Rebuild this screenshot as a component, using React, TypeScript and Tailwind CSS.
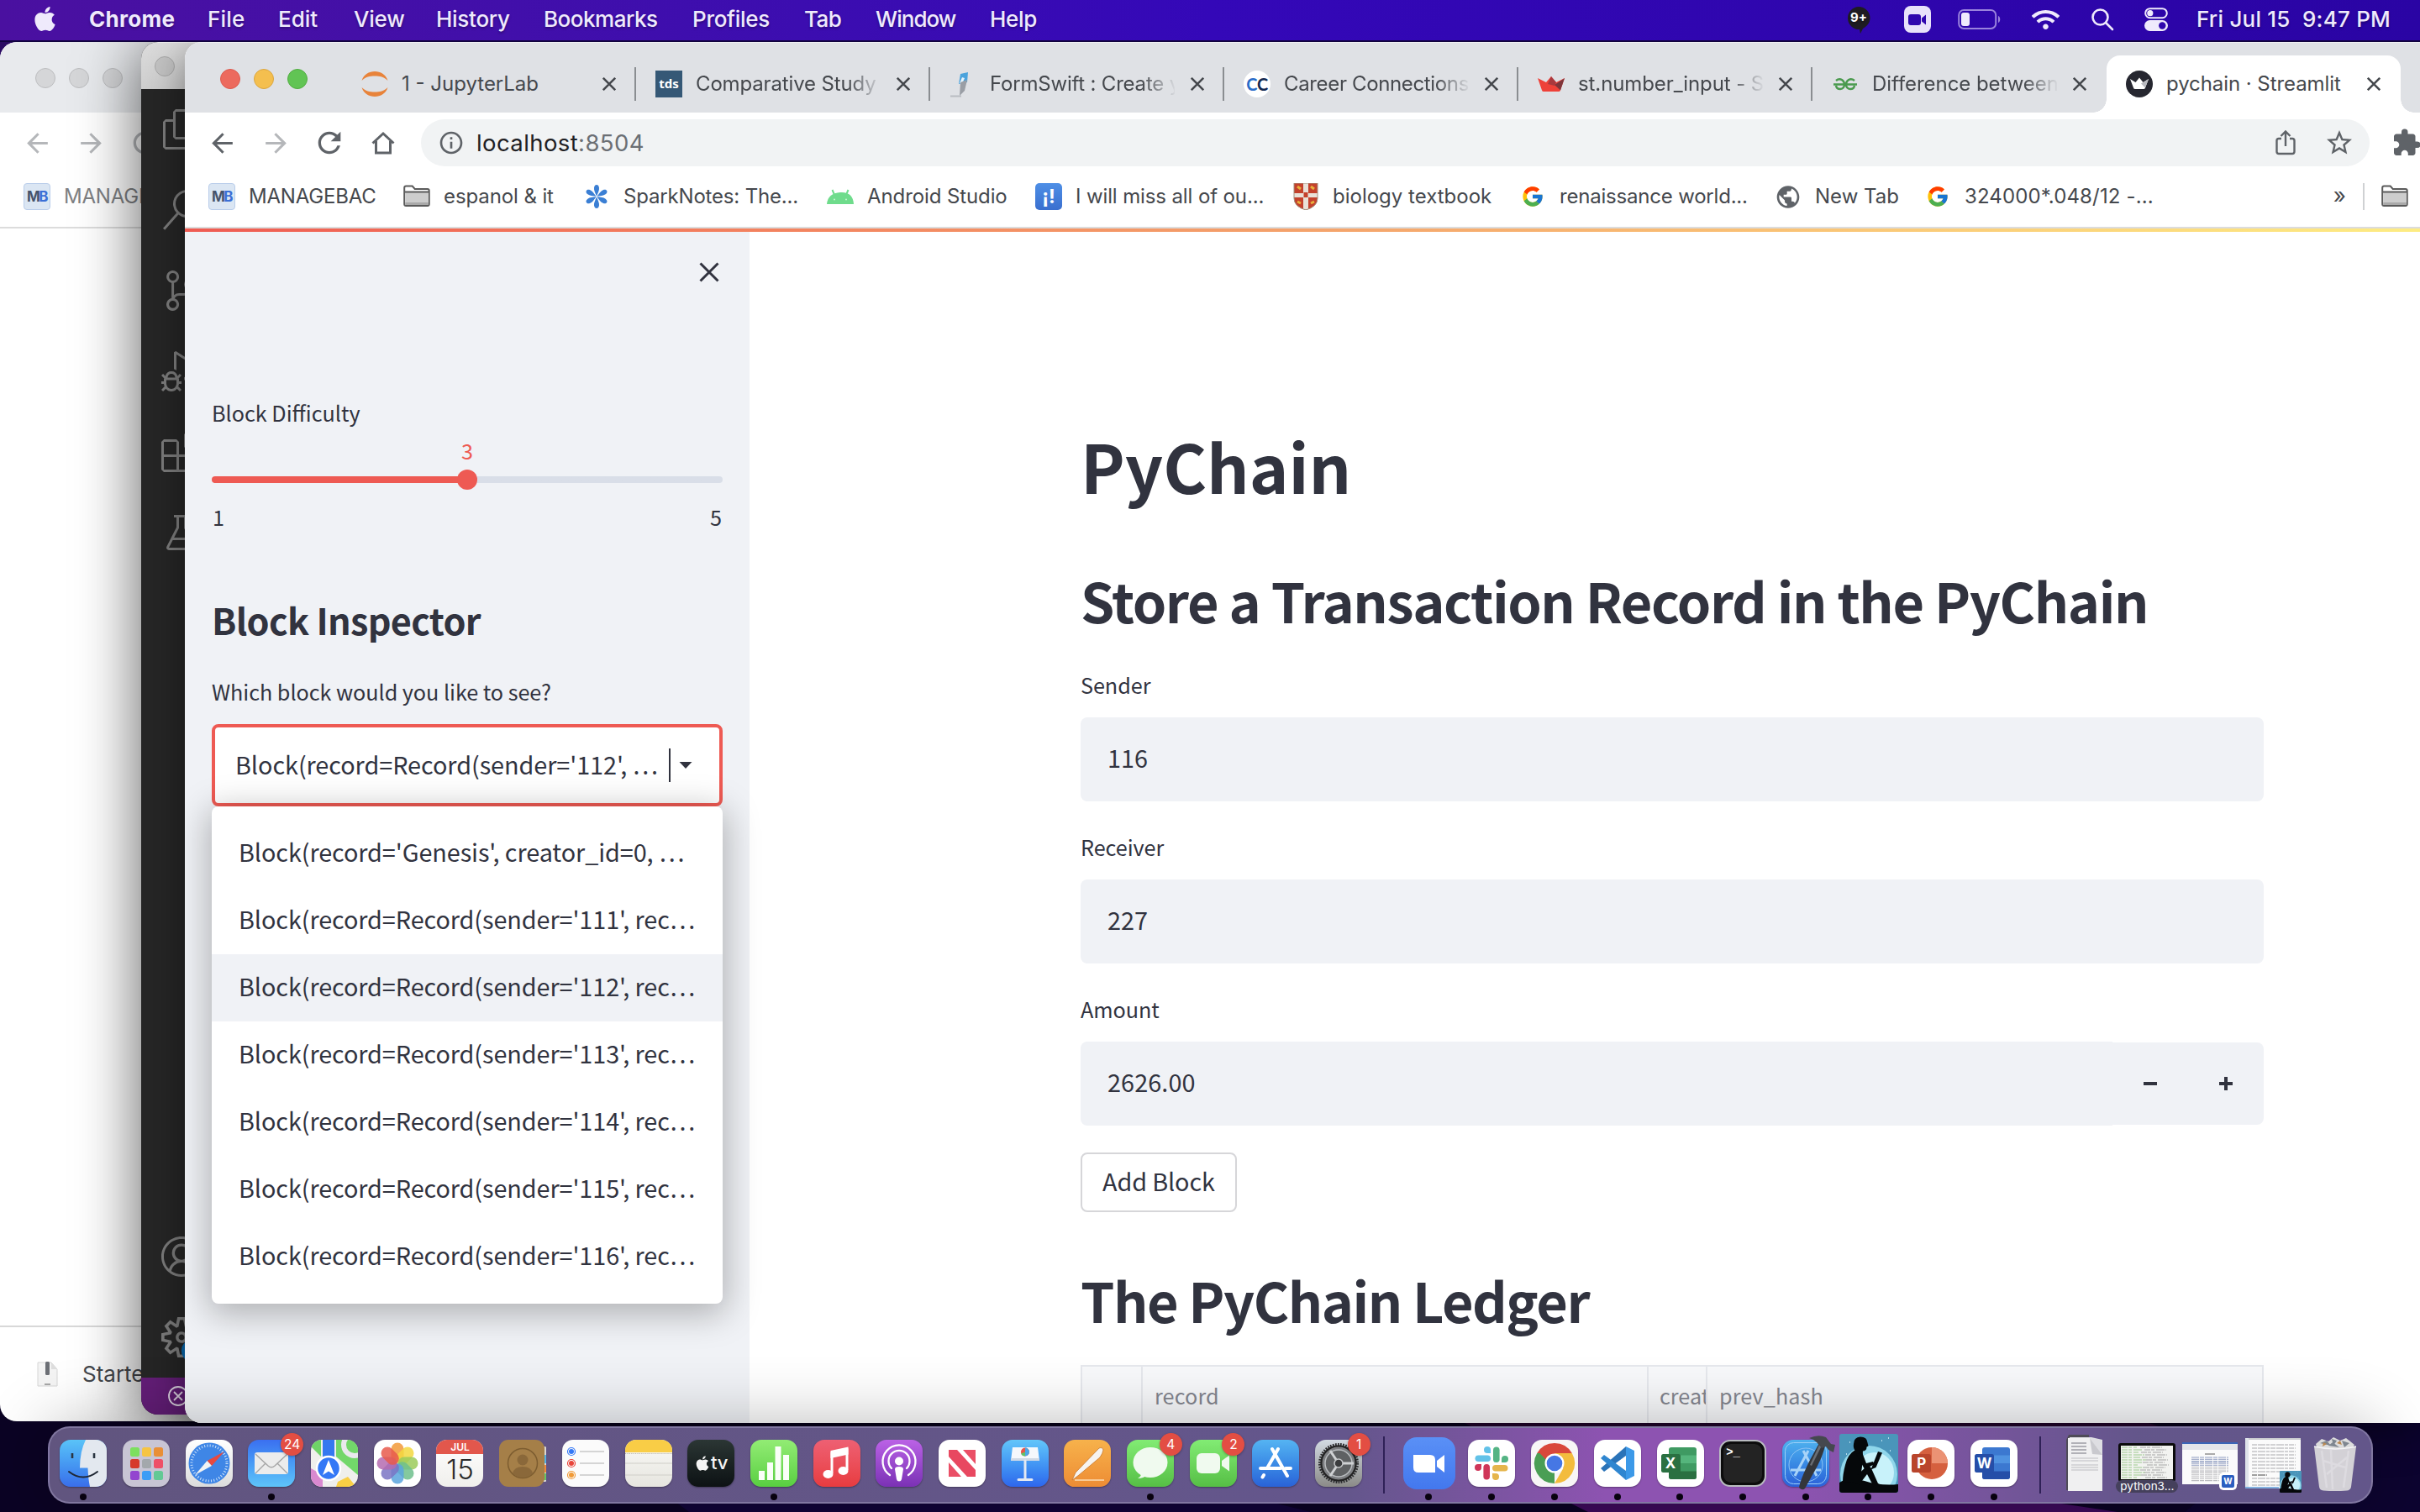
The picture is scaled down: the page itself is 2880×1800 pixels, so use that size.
import React, { ReactNode } from 'react';
import { FaApple, FaWifi } from 'react-icons/fa';
import { FcGoogle } from 'react-icons/fc';
import {
  MdArrowBack,
  MdArrowForward,
  MdExtension,
  MdInfoOutline,
  MdPublic,
  MdRefresh,
  MdStarBorder,
} from 'react-icons/md';
import {
  VscAccount,
  VscBeaker,
  VscDebugAlt,
  VscExtensions,
  VscFiles,
  VscSearch,
  VscSettingsGear,
  VscSourceControl,
} from 'react-icons/vsc';

/* ---------- menu bar ---------- */

const menus: [string, string][] = [
  ['Chrome', 'w-[141px] font-bold tracking-[0.3px]'],
  ['File', 'w-[84px] tracking-[0.2px]'],
  ['Edit', 'w-[90px]'],
  ['View', 'w-[98px] tracking-[-0.2px]'],
  ['History', 'w-[128px] tracking-[-0.28px]'],
  ['Bookmarks', 'w-[177px] tracking-[-0.48px]'],
  ['Profiles', 'w-[133px] tracking-[-0.3px]'],
  ['Tab', 'w-[85px] tracking-[-0.6px]'],
  ['Window', 'w-[136px] tracking-[-0.95px]'],
  ['Help', 'w-[80px] tracking-[-0.3px]'],
];

function MenuBar() {
  return (
    <header className="absolute inset-x-0 top-0 z-40 flex h-[50px] items-center border-b-2 border-[#12033f] bg-linear-to-r from-[#4a10a0] via-[#3408b8] to-[#2a04a4] pb-[2px] text-[26px] leading-[32px] font-medium text-[#efeafc] [text-shadow:0_2px_3px_rgba(0,0,0,0.3)]">
      <div className="flex w-[106px] pb-[2px] pl-[37px]">
        <FaApple size={33} />
      </div>
      {menus.map(([label, cls]) => (
        <span key={label} className={cls}>
          {label}
        </span>
      ))}
      <div className="ml-auto flex items-center">
        <div className="flex w-[70px] justify-center">
          <div className="relative flex h-[32px] w-[28px] items-start justify-center">
            <svg className="absolute inset-0" width="28" height="34" viewBox="0 0 28 34">
              <path d="M14 1a13.500 13.500 0 0 1 13.500 13.500c0 6-4 10-8.500 12.500L16 33l-1-5A13.500 13.500 0 1 1 14 1z" fill="#1e1c22" />
            </svg>
            <span className="relative pt-[1px] text-[15px] leading-[26px] font-bold text-white">9+</span>
          </div>
        </div>
        <div className="flex w-[70px] justify-center">
          <svg width="32" height="32" viewBox="0 0 32 32">
            <rect width="32" height="32" rx="8" fill="#e8e2fa" />
            <rect x="5" y="10" width="15" height="13" rx="3" fill="#2f07ae" />
            <path d="M21 14.500l5-4v12l-5-4z" fill="#2f07ae" />
          </svg>
        </div>
        <div className="flex w-[78px] justify-center">
          <svg width="52" height="26" viewBox="0 0 52 26">
            <rect x="1.200" y="2" width="44" height="22" rx="6" fill="none" stroke="#9a83dd" strokeWidth="2" />
            <rect x="4" y="5" width="10" height="16" rx="3" fill="#efeafc" />
            <path d="M48 9c3 1 3 7 0 8z" fill="#9a83dd" />
          </svg>
        </div>
        <div className="flex w-[78px] justify-center">
          <FaWifi size={33} />
        </div>
        <div className="flex w-[58px] justify-center">
          <svg width="28" height="28" viewBox="0 0 28 28" fill="none" stroke="#efeafc" strokeWidth="2.600" strokeLinecap="round">
            <circle cx="11.500" cy="11.500" r="9" />
            <path d="M18.500 18.500l7.500 7.500" />
          </svg>
        </div>
        <div className="flex w-[70px] justify-center">
          <svg width="28" height="28" viewBox="0 0 28 28">
            <rect x="1.200" y="1.200" width="25.600" height="11" rx="5.500" fill="none" stroke="#efeafc" strokeWidth="2" />
            <circle cx="6.800" cy="6.700" r="3.600" fill="#efeafc" />
            <rect x="0" y="15" width="28" height="13" rx="6.500" fill="#efeafc" />
            <circle cx="21.300" cy="21.500" r="4.200" fill="#2f07ae" />
          </svg>
        </div>
        <span className="w-[279px] pl-[13px] tracking-[0.22px] whitespace-pre">{'Fri Jul 15  9:47 PM'}</span>
      </div>
    </header>
  );
}

/* ---------- shared browser pieces ---------- */

function ManageBacIcon() {
  return (
    <div className="flex size-[32px] shrink-0 items-center justify-center rounded-[4px] border border-[#b9cdea] bg-[#dbe6f3] text-[17px] leading-none font-bold tracking-[-1.500px]">
      <span className="text-[#46536b]">M</span>
      <span className="text-[#3b6fd6]">B</span>
    </div>
  );
}

function FolderIcon() {
  return (
    <svg width="32" height="32" viewBox="0 0 32 32" className="shrink-0">
      <path d="M1.200 5.500q0-2 2-2h7.500l3 3.500h15q2 0 2 2v16q0 2-2 2H3.200q-2 0-2-2z" fill="#fff" stroke="#5a5a5a" strokeWidth="2" />
      <path d="M2.200 11h27.600v12H2.200z" fill="#cdcdcd" />
      <path d="M2.200 23h27.600v3H2.200z" fill="#a9a9a9" />
      <path d="M1 10.500h30" stroke="#5a5a5a" strokeWidth="2" />
    </svg>
  );
}

const HomeIcon = () => (
  <svg width="30" height="30" viewBox="0 0 30 30" fill="none" stroke="#5f6368" strokeWidth="3">
    <path d="M2.500 15.500L15 4l12.500 11.500M6.500 13v14h17V13" />
  </svg>
);

const CloseX = ({ size = 16 }: { size?: number }) => (
  <svg width={size} height={size} viewBox="0 0 16 16" fill="none" stroke="#45484d" strokeWidth="2.500" className="shrink-0">
    <path d="M.8.8l14.400 14.400M15.200.8L.8 15.200" />
  </svg>
);

/* ---------- tabs ---------- */

const JupyterIcon = () => (
  <svg width="32" height="32" viewBox="0 0 32 32" fill="#e8833a">
    <path d="M.5 12C3 4.500 9 1 16 1s13 3.500 15.500 11C27 7.500 22 6.500 16 6.500S5 7.500.5 12z" />
    <path d="M.5 20C3 27.500 9 31 16 31s13-3.500 15.500-11C27 24.500 22 25.500 16 25.500S5 24.500.5 20z" />
  </svg>
);
const TdsIcon = () => (
  <div className="flex size-[32px] items-center justify-center bg-[#355876] pb-[2px] font-['Noto_Sans'] text-[15px] leading-none font-bold text-white">tds</div>
);
const FormSwiftIcon = () => (
  <svg width="32" height="32" viewBox="0 0 32 32">
    <path d="M13 4l9-2-1 12-10 2z" fill="#4ba3dc" />
    <path d="M15 8l3 1-3 7-3-1z" fill="#e8f3fb" />
    <path d="M13 14l8-3-3 13-6 6z" fill="#9a9ea5" />
    <path d="M1 30.500h13" stroke="#b9bcc2" strokeWidth="2" />
  </svg>
);
const CareerIcon = () => (
  <div className="flex size-[32px] items-center justify-center rounded-full bg-white font-['Lato'] text-[20px] leading-none font-bold tracking-[-0.500px]">
    <span className="text-[#2a6cc8]">C</span>
    <span className="text-[#12284f]">C</span>
  </div>
);
const CrownIcon = () => (
  <svg width="32" height="32" viewBox="0 0 32 32">
    <path d="M0 9l10 5 6-7 6 7 10-5-5 14.500q-.5 1.500-2 1.500H7q-1.500 0-2-1.500z" fill="#ee4139" />
    <path d="M16 7l6 7-2 4-8-2z" fill="#a8393e" />
    <path d="M32 9l-5 14.500-7-6.500z" fill="#7d353b" />
  </svg>
);
const GfgIcon = () => (
  <svg width="32" height="32" viewBox="0 0 32 32" fill="none" stroke="#4a9a4e" strokeWidth="2.400">
    <path d="M5 12q3.500-3 7-1 3 2 3 5.500 0 5-5 5.500-4.500 0-5-4M27 12q-3.500-3-7-1-3 2-3 5.500 0 5 5 5.500 4.500 0 5-4M2 16.500h28" />
  </svg>
);
const StreamlitIcon = () => (
  <svg width="32" height="32" viewBox="0 0 32 32">
    <circle cx="16" cy="16" r="16" fill="#262730" />
    <path d="M5 10l6.500 4L16 8.500l4.500 5.500L27 10l-4 10.500q-.4 1.500-2 1.500H11q-1.600 0-2-1.500z" fill="#fff" />
    <path d="M27 10l-4 10.500-5-5z" fill="#b9bac0" />
  </svg>
);

const tabs: { title: string; icon: ReactNode; cls: string; fade?: boolean; active?: boolean; sep?: boolean }[] = [
  { title: '1 - JupyterLab', icon: <JupyterIcon />, cls: '', sep: true },
  { title: 'Comparative Study', icon: <TdsIcon />, cls: 'tracking-[-0.15px]', fade: true, sep: true },
  { title: 'FormSwift : Create y', icon: <FormSwiftIcon />, cls: 'tracking-[-0.2px]', fade: true, sep: true },
  { title: 'Career Connections', icon: <CareerIcon />, cls: 'tracking-[-0.35px]', fade: true, sep: true },
  { title: 'st.number_input - S', icon: <CrownIcon />, cls: 'tracking-[-0.1px]', fade: true, sep: true },
  { title: 'Difference between', icon: <GfgIcon />, cls: 'tracking-[-0.05px]', fade: true },
  { title: 'pychain · Streamlit', icon: <StreamlitIcon />, cls: 'tracking-[-0.07px]', active: true },
];

function TabStrip() {
  return (
    <div className="flex h-[84px] items-end overflow-hidden border-t border-[#f0f1f3] bg-[#dfe1e5]">
      <div className="flex h-[84px] w-[187px] shrink-0 items-center gap-[16px] pt-[3px] pl-[42px]">
        <span className="size-[24px] rounded-full border border-[#dd5b50] bg-[#ec6a5e]" />
        <span className="size-[24px] rounded-full border border-[#dba640] bg-[#f4bf4f]" />
        <span className="size-[24px] rounded-full border border-[#52ad42] bg-[#61c454]" />
      </div>
      {tabs.map((t) => (
        <div
          key={t.title}
          className={
            t.active
              ? 'relative flex h-[68px] w-[350px] shrink-0 items-center rounded-t-[16px] bg-white pl-[23px]'
              : 'relative flex h-[68px] w-[350px] shrink-0 items-center pl-[23px]'
          }
        >
          {t.active && (
            <>
              <span className="absolute bottom-0 -left-[16px] size-[16px] bg-[radial-gradient(circle_at_0_0,transparent_15.5px,#fff_16px)]" />
              <span className="absolute -right-[16px] bottom-0 size-[16px] bg-[radial-gradient(circle_at_100%_0,transparent_15.5px,#fff_16px)]" />
            </>
          )}
          <span className="shrink-0">{t.icon}</span>
          <span
            className={`ml-[16px] w-[220px] shrink-0 text-[24px] leading-[32px] whitespace-nowrap text-[#45484d] ${t.cls} ${t.fade ? '[mask-image:linear-gradient(to_right,#000_82%,transparent_101%)]' : ''}`}
          >
            {t.title}
          </span>
          <span className="ml-[19px]">
            <CloseX />
          </span>
          {t.sep && <span className="ml-auto h-[40px] w-[2px] bg-[#8a8d91]" />}
        </div>
      ))}
    </div>
  );
}

/* ---------- toolbar and bookmarks ---------- */

function Toolbar() {
  return (
    <div className="flex h-[72px] items-center overflow-hidden bg-white pl-[12px] text-[#5f6368]">
      <span className="flex w-[64px] shrink-0 justify-center">
        <MdArrowBack size={37} />
      </span>
      <span className="flex w-[64px] shrink-0 justify-center text-[#b5b7ba]">
        <MdArrowForward size={37} />
      </span>
      <span className="flex w-[64px] shrink-0 justify-center">
        <MdRefresh size={40} />
      </span>
      <span className="flex w-[64px] shrink-0 justify-center">
        <HomeIcon />
      </span>
      <div className="ml-[13px] flex h-[56px] w-[2319px] shrink-0 items-center rounded-full bg-[#f1f3f4] pl-[20px]">
        <MdInfoOutline size={32} />
        <span className="ml-[14px] text-[27.500px] leading-[36px] tracking-[0.400px] text-[#1f2124]">
          localhost<span className="text-[#6b6f74]">:8504</span>
        </span>
        <div className="ml-auto flex items-center gap-[33px] pr-[18px]">
          <svg width="26" height="32" viewBox="0 0 26 32" fill="none" stroke="#5f6368" strokeWidth="2.400">
            <path d="M8 11H5q-2.500 0-2.500 2.500v13Q2.500 29 5 29h16q2.500 0 2.500-2.500v-13Q23.500 11 21 11h-3M13 20V3M7.500 8L13 2.500 18.500 8" />
          </svg>
          <MdStarBorder size={36} />
        </div>
      </div>
      <span className="ml-[26px] shrink-0">
        <MdExtension size={36} />
      </span>
    </div>
  );
}

const SparkIcon = () => (
  <svg width="32" height="32" viewBox="0 0 32 32" fill="#3b7fd4">
    {[0, 60, 120, 180, 240, 300].map((a) => (
      <path key={a} d="M16 15.500c-1.600-4-3.400-7-3-10C13.300 3 14.500 2 16 2s2.700 1 3 3.500c.4 3-1.400 6-3 10z" transform={`rotate(${a} 16 16)`} />
    ))}
  </svg>
);
const AndroidIcon = () => (
  <svg width="32" height="32" viewBox="0 0 32 32">
    <path d="M0 25Q1 12 16 11t16 14z" fill="#6fdc8c" />
    <path d="M9 14L6.500 8M23 14l2.500-6" stroke="#6fdc8c" strokeWidth="2" />
    <circle cx="9" cy="19.500" r="1" fill="#c8f3d2" />
    <circle cx="23" cy="19.500" r="1" fill="#c8f3d2" />
  </svg>
);
const NoteIcon = () => (
  <div className="flex size-[32px] items-center justify-center rounded-[5px] bg-linear-to-b from-[#4e8fe6] to-[#3a6fcf] text-[23px] leading-none font-bold text-white">¡!</div>
);
const ShieldIcon = () => (
  <svg width="32" height="32" viewBox="0 0 32 32">
    <path d="M2 0h28v18q0 10-14 14Q2 28 2 18z" fill="#c4412c" />
    <path d="M13 0h6v31.500h-6zM2 12h28v5H2z" fill="#e9e1d8" />
    <path d="M6 4l4 3M22 4l4 3M6 22l4 2M22 24l4-2" stroke="#e8b23c" strokeWidth="3" />
    <path d="M13.500 11h5v6h-5z" fill="#c4412c" />
    <path d="M2 0h28v18q0 10-14 14Q2 28 2 18z" fill="none" stroke="#a2917f" strokeWidth="1" />
  </svg>
);

const bookmarks: { title: string; icon: ReactNode; cls: string; textCls: string }[] = [
  { title: 'MANAGEBAC', icon: <ManageBacIcon />, cls: 'w-[232px]', textCls: 'tracking-[-0.2px]' },
  { title: 'espanol & it', icon: <FolderIcon />, cls: 'w-[214px]', textCls: 'tracking-[-0.1px]' },
  { title: 'SparkNotes: The...', icon: <SparkIcon />, cls: 'w-[290px]', textCls: 'tracking-[-0.18px]' },
  { title: 'Android Studio', icon: <AndroidIcon />, cls: 'w-[248px]', textCls: 'tracking-[-0.1px]' },
  { title: 'I will miss all of ou...', icon: <NoteIcon />, cls: 'w-[306px]', textCls: 'tracking-[-0.12px]' },
  { title: 'biology textbook', icon: <ShieldIcon />, cls: 'w-[270px]', textCls: '' },
  { title: 'renaissance world...', icon: <FcGoogle size={28} />, cls: 'w-[304px]', textCls: 'tracking-[-0.2px]' },
  { title: 'New Tab', icon: <MdPublic size={35} color="#5f6368" />, cls: 'w-[178px]', textCls: '' },
  { title: '324000*.048/12 -...', icon: <FcGoogle size={28} />, cls: 'w-[300px]', textCls: 'tracking-[0.14px]' },
];

function BookmarkBar() {
  return (
    <div className="flex h-[66px] items-start overflow-hidden border-b-2 border-[#dcdcdc] bg-white pl-[28px] text-[24px] leading-[32px] text-[#45484d]">
      {bookmarks.map((b) => (
        <div key={b.title} className={`flex h-[56px] shrink-0 items-center ${b.cls}`}>
          <span className="flex size-[32px] shrink-0 items-center justify-center">{b.icon}</span>
          <span className={`ml-[16px] whitespace-nowrap ${b.textCls}`}>{b.title}</span>
        </div>
      ))}
      <div className="ml-auto flex h-[56px] shrink-0 items-center pr-[14px]">
        <span className="mr-[20px] pb-[3px] text-[26px]">»</span>
        <span className="mr-[20px] h-[32px] w-[2px] bg-[#cfd1d3]" />
        <FolderIcon />
      </div>
    </div>
  );
}

/* ---------- streamlit page ---------- */

const options = [
  "Block(record='Genesis', creator_id=0, …",
  "Block(record=Record(sender='111', rec…",
  "Block(record=Record(sender='112', rec…",
  "Block(record=Record(sender='113', rec…",
  "Block(record=Record(sender='114', rec…",
  "Block(record=Record(sender='115', rec…",
  "Block(record=Record(sender='116', rec…",
];

function Sidebar() {
  return (
    <aside className="flex w-[672px] shrink-0 flex-col bg-[#f0f2f6] px-[32px]">
      <div className="flex h-[96px] items-center justify-end pr-[4px]">
        <svg width="24" height="24" viewBox="0 0 24 24" fill="none" stroke="#31333f" strokeWidth="3">
          <path d="M1.500 1.500l21 21M22.500 1.500l-21 21" />
        </svg>
      </div>
      <div className="mt-[99px] text-[25.200px] leading-[40px]">Block Difficulty</div>
      <div className="mt-[5px] text-center text-[25.200px] leading-[40px] text-[#ee5a53]">3</div>
      <div className="relative mt-[11px] h-[8px] rounded-[4px] bg-linear-to-r from-[#ee5a53] from-50% to-[#d9dee8] to-50%">
        <span className="absolute top-[-8px] left-[292px] size-[24px] rounded-full bg-[#ee5a53]" />
      </div>
      <div className="mt-[20px] flex justify-between pr-[1px] pl-[1px] text-[25.200px] leading-[40px]">
        <span>1</span>
        <span>5</span>
      </div>
      <h2 className="mt-[72px] text-[43.200px] leading-[60px] font-bold tracking-[-0.700px]">Block Inspector</h2>
      <div className="mt-[36px] text-[25.200px] leading-[40px] tracking-[-0.040px]">Which block would you like to see?</div>
      <div className="relative mt-[19px] flex h-[98px] items-center rounded-[8px] border-4 border-[#ee5a53] bg-white pl-[24px]">
        <span className="pb-[3px] text-[28.800px] leading-[40px] tracking-[-0.050px] whitespace-nowrap">Block(record=Record(sender='112', …</span>
        <span className="absolute left-[540px] h-[40px] w-[2px] bg-[#31333f]" />
        <svg className="absolute left-[552px]" width="16" height="8" viewBox="0 0 16 8">
          <path d="M.5 0h15L8 8z" fill="#31333f" />
        </svg>
        <div className="absolute top-[94px] -left-[4px] w-[608px] rounded-[8px] bg-white py-[16px] shadow-[0_8px_40px_4px_rgba(0,0,0,0.28)]">
          {options.map((o, i) => (
            <div
              key={o}
              className={
                i === 2
                  ? 'h-[80px] bg-[#f0f2f6] pl-[32px] text-[28.800px] leading-[75px] tracking-[-0.080px] whitespace-nowrap'
                  : 'h-[80px] pl-[32px] text-[28.800px] leading-[75px] tracking-[-0.080px] whitespace-nowrap'
              }
            >
              {o}
            </div>
          ))}
        </div>
      </div>
    </aside>
  );
}

function Field({ label, children }: { label: string; children: ReactNode }) {
  return (
    <div className="mb-[35px]">
      <div className="text-[25.200px] leading-[38px] tracking-[-0.050px]">{label}</div>
      <div className="mt-[20px]">{children}</div>
    </div>
  );
}

function PageMain() {
  return (
    <main className="flex-1 pt-[228px] pl-[394px]">
      <div className="w-[1408px]">
        <h1 className="text-[79.200px] leading-[100px] font-bold tracking-[-0.050px]">PyChain</h1>
        <h2 className="mt-[70px] text-[64.800px] leading-[80px] font-bold tracking-[-1.400px] whitespace-nowrap">Store a Transaction Record in the PyChain</h2>
        <div className="mt-[42px]">
          <Field label="Sender">
            <div className="h-[100px] rounded-[8px] bg-[#f0f2f6] pl-[32px] text-[28.800px] leading-[96px]">116</div>
          </Field>
          <Field label="Receiver">
            <div className="h-[100px] rounded-[8px] bg-[#f0f2f6] pl-[32px] text-[28.800px] leading-[96px]">227</div>
          </Field>
          <Field label="Amount">
            <div className="flex items-center">
              <div className="h-[100px] w-[1228px] rounded-l-[8px] bg-[#f0f2f6] pl-[32px] text-[28.800px] leading-[96px] tracking-[0.100px]">2626.00</div>
              <div className="flex h-[98px] flex-1 items-center rounded-r-[8px] bg-[#f0f2f6]">
                <span className="flex w-[90px] justify-center">
                  <span className="h-[4px] w-[16px] bg-[#31333f]" />
                </span>
                <svg className="ml-[37px]" width="16" height="16" viewBox="0 0 16 16" fill="#31333f">
                  <path d="M6 0h4v6h6v4h-6v6H6v-6H0V6h6z" />
                </svg>
              </div>
            </div>
          </Field>
        </div>
        <button className="mt-[-3px] flex h-[71px] items-center rounded-[8px] border-2 border-[#d6d6d9] bg-white px-[24px] pb-[4px] text-[28.800px] leading-[40px] tracking-[-0.110px]">
          Add Block
        </button>
        <h2 className="mt-[64px] text-[64.800px] leading-[80px] font-bold tracking-[-1.500px] whitespace-nowrap">The PyChain Ledger</h2>
        <div className="mt-[38px] flex h-[80px] border-2 border-[#e6e8ed] bg-[#f8f9fb] text-[25.200px] leading-[68px] text-[#84868f]">
          <div className="w-[70px]" />
          <div className="w-[602px] border-l-2 border-[#e6e8ed] pl-[14px] tracking-[0.110px]">record</div>
          <div className="w-[70px] overflow-hidden border-l-2 border-[#e6e8ed] pl-[13px] whitespace-nowrap">creat</div>
          <div className="flex-1 border-l-2 border-[#e6e8ed] pl-[14px] tracking-[0.100px]">prev_hash</div>
        </div>
      </div>
    </main>
  );
}

/* ---------- windows ---------- */

function BackBrowser() {
  return (
    <section className="absolute top-[50px] left-0 flex h-[1642px] w-[400px] flex-col overflow-hidden rounded-[20px] bg-white">
      <div className="flex h-[84px] items-center gap-[16px] bg-[#e8eaed] pt-[2px] pl-[42px]">
        {[0, 1, 2].map((i) => (
          <span key={i} className="size-[24px] rounded-full border border-[#bcbdbf] bg-[#d5d6d8]" />
        ))}
      </div>
      <div className="flex h-[72px] items-center pl-[12px] text-[#b5b7ba]">
        <span className="flex w-[64px] shrink-0 justify-center">
          <MdArrowBack size={37} />
        </span>
        <span className="flex w-[64px] shrink-0 justify-center">
          <MdArrowForward size={37} />
        </span>
        <span className="flex w-[64px] shrink-0 justify-center">
          <MdRefresh size={40} />
        </span>
      </div>
      <div className="flex h-[66px] items-start border-b-2 border-[#dcdcdc] pl-[28px]">
        <div className="flex h-[56px] items-center text-[24px] leading-[32px] tracking-[-0.200px] text-[#7e8083]">
          <ManageBacIcon />
          <span className="ml-[16px]">MANAGEBAC</span>
        </div>
      </div>
      <div className="mt-auto flex h-[114px] items-center border-t-2 border-[#d8d8d8] pl-[44px] text-[26px] leading-[32px] text-[#45484d]">
        <svg width="25" height="30" viewBox="0 0 25 30">
          <path d="M1 1h16l7 8v20H1z" fill="#f4f4f4" stroke="#d6d6d6" />
          <path d="M17 1v8h7z" fill="#dedede" />
          <rect x="10" y="0" width="5" height="16" rx="1.500" fill="#6d7076" />
          <path d="M9 27h7" stroke="#a6a6a6" strokeWidth="2" />
        </svg>
        <span className="ml-[29px]">Started</span>
      </div>
    </section>
  );
}

function CodeWindow() {
  const cell = 'flex h-[96px] w-[96px] items-center justify-center';
  return (
    <section className="absolute top-[50px] left-[168px] flex h-[1634px] w-[400px] flex-col overflow-clip rounded-[20px] bg-[#262626] text-[#7d7d7d] shadow-[0_10px_70px_6px_rgba(0,0,0,0.55)]">
      <div className="flex h-[56px] items-center border-t border-[#efefef] bg-linear-to-b from-[#dcdcdc] to-[#cfcfcf] pl-[16px]">
        <span className="size-[24px] rounded-full border border-[#a9a9a9] bg-[#c4c4c4]" />
      </div>
      <div className={cell}><VscFiles size={48} /></div>
      <div className={cell}><VscSearch size={48} /></div>
      <div className={cell}><VscSourceControl size={48} /></div>
      <div className={cell}><VscDebugAlt size={48} /></div>
      <div className={cell}><VscExtensions size={48} /></div>
      <div className={cell}><VscBeaker size={48} /></div>
      <div className="mt-auto">
        <div className={cell}><VscAccount size={48} /></div>
      </div>
      <div className={`relative ${cell}`}>
        <VscSettingsGear size={48} />
        <span className="absolute top-[50px] left-[48px] size-[28px] rounded-full bg-[#0a6ab0]" />
      </div>
      <div className="flex h-[44px] items-center bg-[#641e78] pl-[32px]">
        <svg width="24" height="24" viewBox="0 0 24 24" fill="none" stroke="#e6dcea" strokeWidth="1.800">
          <circle cx="12" cy="12" r="11" />
          <path d="M7 7l10 10M17 7L7 17" />
        </svg>
      </div>
    </section>
  );
}

function FrontBrowser() {
  return (
    <section className="absolute top-[50px] left-[220px] flex h-[1644px] w-[2660px] flex-col rounded-l-[20px] bg-white shadow-[0_10px_50px_rgba(0,0,0,0.45)]">
      <div className="flex h-full flex-col overflow-hidden rounded-l-[20px]">
        <TabStrip />
        <Toolbar />
        <BookmarkBar />
        <div className="h-[4px] shrink-0 bg-linear-to-r from-[#ef5b52] via-[#f4a26b] to-[#fdec83]" />
        <div className="flex min-h-0 flex-1 font-['Noto_Sans_CJK_SC',sans-serif] text-[#31333f]">
          <Sidebar />
          <PageMain />
        </div>
      </div>
    </section>
  );
}

/* ---------- dock icons ---------- */

const tile = 'flex size-[56px] items-center justify-center overflow-hidden rounded-[13px] shadow-[0_1px_2px_rgba(0,0,0,0.35)]';
const S = ({ children }: { children: ReactNode }) => (
  <svg width="56" height="56" viewBox="0 0 56 56" fill="none">
    {children}
  </svg>
);

const Finder = () => (
  <div className={`${tile} bg-linear-to-b from-[#5ac3f8] to-[#3a6eea]`}>
    <S>
      <path d="M31 0h25v56H36q-2-9-2.500-22.500H24Q24 14 31 0z" fill="#e3e8ef" />
      <path d="M15 16v6M41 16v6" stroke="#2a3440" strokeWidth="2.600" />
      <path d="M11 38q17 13 34 0" stroke="#1f2733" strokeWidth="2" strokeLinecap="round" />
    </S>
  </div>
);
const launchColors = ['#7ddf5f', '#f6c443', '#e98f37', '#d63a2c', '#a3a8ac', '#ee5068', '#9345cf', '#3c9df5', '#63c995'];
const Launchpad = () => (
  <div className={`${tile} bg-[#c8c5d4]`}>
    <S>
      {launchColors.map((c, i) => (
        <rect key={c} x={9 + (i % 3) * 14} y={9 + Math.floor(i / 3) * 14} width="11" height="11" rx="2.500" fill={c} />
      ))}
    </S>
  </div>
);
const Safari = () => (
  <div className={`${tile} bg-linear-to-b from-white to-[#dcdcdc]`}>
    <S>
      <circle cx="28" cy="28" r="24.500" fill="#3f86e6" />
      <circle cx="28" cy="28" r="21" stroke="#cfe4fb" strokeWidth="3" strokeDasharray="1 2.300" />
      <path d="M46 14L31 31l-5.500-6z" fill="#e8493f" />
      <path d="M11 42l14.500-17L31 31z" fill="#f3f3f3" />
    </S>
  </div>
);
const Mail = () => (
  <div className={`${tile} bg-linear-to-b from-[#3b6ff0] to-[#5ec4f9]`}>
    <S>
      <rect x="8" y="15" width="40" height="26" rx="3" fill="#ececec" />
      <path d="M9 17l15 14q4 3.500 8 0l15-14M9 40l12-12M47 40L35 28" stroke="#a5a5a5" strokeWidth="1.400" />
    </S>
  </div>
);
const MapsIcon = () => (
  <div className={`${tile} bg-[#efefec]`}>
    <S>
      <path d="M0 0h12v20L0 8z" fill="#6fd467" />
      <path d="M30 0h26v42L30 20z" fill="#72d76a" />
      <circle cx="52" cy="6" r="13" fill="#72d76a" stroke="#e9e9ee" strokeWidth="6" />
      <path d="M0 34l14 8v14H0z" fill="#d989d0" />
      <path d="M32 50l12-6 10 12H30z" fill="#f9cf45" />
      <path d="M14 0h14v30H14z" fill="#3478f0" />
      <circle cx="21" cy="34" r="14" fill="#3478f6" stroke="#fff" strokeWidth="2.500" />
      <path d="M21 24l7 18-7-4.500-7 4.500z" fill="#fff" />
    </S>
  </div>
);
const petalColors = ['#f29a38', '#f3d83f', '#9bcb5a', '#6fbf8d', '#5aa5dd', '#7a74c4', '#b56bb0', '#e85a4c'];
const Photos = () => (
  <div className={`${tile} bg-white`}>
    <S>
      {petalColors.map((c, i) => (
        <rect key={c} x="20.500" y="3.500" width="15" height="24" rx="7.500" fill={c} opacity="0.850" transform={`rotate(${i * 45} 28 28)`} />
      ))}
    </S>
  </div>
);
const Calendar = () => (
  <div className="flex size-[56px] flex-col items-center overflow-hidden rounded-[13px] bg-linear-to-b from-white to-[#f0efec]">
    <div className="h-[17px] w-full bg-[#e2574c] text-center text-[12px] leading-[18px] font-semibold text-white">JUL</div>
    <div className="text-[33px] leading-[37px] font-light text-[#2b2b2b]">15</div>
  </div>
);
const Contacts = () => (
  <div className="flex size-[56px] items-center justify-center">
    <S>
      <rect x="46" y="8" width="11" height="42" rx="3" fill="#d8d6d2" />
      <path d="M53 18h4v10h-4z" fill="#55b3e4" />
      <path d="M53 30h4v9h-4z" fill="#ee8b3b" />
      <path d="M53 40h4v8h-4z" fill="#67c566" />
      <rect x="0" y="0" width="54" height="56" rx="11" fill="#a57f48" />
      <circle cx="28" cy="28" r="17.500" stroke="#7d5d30" strokeWidth="1.500" />
      <circle cx="28" cy="24" r="6.500" fill="#8a683a" />
      <path d="M16 40q2-8 12-8t12 8q-5 5-12 5t-12-5z" fill="#8a683a" />
    </S>
  </div>
);
const Reminders = () => (
  <div className={`${tile} bg-[#fbfbfb]`}>
    <S>
      {['#3478f6', '#e8453a', '#f09a37'].map((c, i) => (
        <g key={c}>
          <circle cx="11" cy={14 + i * 14} r="4.500" stroke={c} strokeWidth="1.200" />
          <circle cx="11" cy={14 + i * 14} r="3" fill={c} />
          <path d={`M21 ${14 + i * 14}h29`} stroke="#c9c9c9" strokeWidth="1.500" />
        </g>
      ))}
    </S>
  </div>
);
const Notes = () => (
  <div className={`${tile} bg-linear-to-b from-[#fafaf7] to-[#e6e5df]`}>
    <S>
      <path d="M0 0h56v15H0z" fill="#f9cd46" />
      <path d="M0 16.500h56" stroke="#b9b5a5" strokeWidth="1.200" strokeDasharray="1.200 1.200" />
      <path d="M0 28h56M0 42h56" stroke="#cfcec8" strokeWidth="1" />
    </S>
  </div>
);
const AppleTv = () => (
  <div className={`${tile} bg-linear-to-b from-[#2b3634] to-[#0d1214] text-[#f5f5f5]`}>
    <FaApple size={20} />
    <span className="pb-[2px] text-[22px] leading-none font-medium">tv</span>
  </div>
);
const Numbers = () => (
  <div className={`${tile} bg-linear-to-b from-[#92ec74] to-[#58cf40]`}>
    <S>
      <path d="M10 37h7v11h-7zM20 27h7v21h-7zM29.500 8h7v40h-7zM39 18h7v30h-7z" fill="#fafff8" />
    </S>
  </div>
);
const Music = () => (
  <div className={`${tile} bg-linear-to-b from-[#ee6073] to-[#e83b3f]`}>
    <S>
      <path d="M22 40V16l18-4v24" stroke="#fff" strokeWidth="3" />
      <path d="M20.500 13L41.500 8.500v9L20.500 22z" fill="#fff" />
      <ellipse cx="17.500" cy="41" rx="6" ry="5" fill="#fff" />
      <ellipse cx="35.500" cy="37" rx="6" ry="5" fill="#fff" />
    </S>
  </div>
);
const Podcasts = () => (
  <div className={`${tile} bg-linear-to-b from-[#bb62e6] to-[#7b31b5]`}>
    <S>
      <path d="M17 42a19.500 19.500 0 1 1 22 0" stroke="#fff" strokeWidth="2.300" strokeLinecap="round" />
      <path d="M19 34a12.500 12.500 0 1 1 18 0" stroke="#fff" strokeWidth="2.300" strokeLinecap="round" />
      <circle cx="28" cy="25.500" r="5" fill="#fff" />
      <path d="M23 35q0-3 5-3t5 3l-2 12q-.5 2.500-3 2.500T25 47z" fill="#fff" />
    </S>
  </div>
);
const News = () => (
  <div className={`${tile} bg-white`}>
    <S>
      <path d="M12 12h10l22 24v8H34L12 20z" fill="#e84860" />
      <path d="M12 27l15 17H12zM29 12h15v17z" fill="#ea4f66" />
    </S>
  </div>
);
const Keynote = () => (
  <div className={`${tile} bg-linear-to-b from-[#63c6fa] to-[#2f66ec]`}>
    <S>
      <path d="M13 9h30l2 16H11z" fill="#f5f8fc" />
      <path d="M11 22h34v3H11z" fill="#cfd9e6" />
      <circle cx="28" cy="14.500" r="5" fill="#e8564a" />
      <path d="M28 9.500a5 5 0 0 1 0 10z" fill="#4ba6e8" />
      <path d="M28 14.500l-5 2a5 5 0 0 0 5 3z" fill="#62c267" />
      <path d="M28 25v22M20 47.500h16" stroke="#e3e9f2" strokeWidth="3" strokeLinecap="round" />
    </S>
  </div>
);
const Pages = () => (
  <div className={`${tile} bg-linear-to-b from-[#f7b24b] to-[#ed8c34]`}>
    <S>
      <path d="M42 10q4-1.500 5 2-.5 4-4 9L18 42l-8 6 4-9z" fill="#f7f4f0" stroke="#c77a30" strokeWidth="0.800" />
      <path d="M13 48h35" stroke="#fbdcb5" strokeWidth="1.500" />
    </S>
  </div>
);
const Messages = () => (
  <div className={`${tile} bg-linear-to-b from-[#82ec74] to-[#56bf45]`}>
    <S>
      <ellipse cx="28" cy="27" rx="20.500" ry="18" fill="#f0faef" />
      <path d="M17 38q1 5-4 8 7 0 11-4z" fill="#f0faef" />
    </S>
  </div>
);
const FaceTime = () => (
  <div className={`${tile} bg-linear-to-b from-[#82ec74] to-[#56bf45]`}>
    <S>
      <rect x="8" y="16" width="28" height="24" rx="6" fill="#f0faef" />
      <path d="M38 25l9-6.500v19L38 31z" fill="#f0faef" />
    </S>
  </div>
);
const AppStore = () => (
  <div className={`${tile} bg-linear-to-b from-[#55b4f2] to-[#2a62d8]`}>
    <S>
      <path d="M24 11l18 32M31 11L18.500 33M14 42l-1.500 2.500M10 34h24M40 34h6" stroke="#fff" strokeWidth="4" strokeLinecap="round" />
    </S>
  </div>
);
const Settings = () => (
  <div className={`${tile} bg-linear-to-b from-[#d3dbe3] to-[#8b8b88]`}>
    <S>
      <circle cx="28" cy="28" r="22" fill="#7d7f82" stroke="#2b2c2e" strokeWidth="4" strokeDasharray="1.700 1.300" />
      <circle cx="28" cy="28" r="20.500" stroke="#222" strokeWidth="2" />
      <circle cx="28" cy="28" r="16" fill="#5f6163" stroke="#b9bcbf" strokeWidth="1.500" />
      <path d="M28 28L18 13M28 28h18M28 28L18 43" stroke="#cfd1d3" strokeWidth="3" />
      <circle cx="28" cy="28" r="5" fill="#3b3c3e" stroke="#c5c7c9" strokeWidth="1.500" />
    </S>
  </div>
);
const Zoom = () => (
  <div className="flex size-[62px] items-center justify-center rounded-[16px] bg-linear-to-b from-[#5a90f6] to-[#4378ee]">
    <S>
      <path d="M9 18h20q6 0 6 6v15H15q-6 0-6-6z" fill="#fff" />
      <path d="M37 25l9-7v21l-9-7z" fill="#fff" />
    </S>
  </div>
);
const Slack = () => (
  <div className={`${tile} bg-white`}>
    <S>
      {['#54b484', '#e5b54c', '#cf3659', '#62c2e8'].map((c, i) => (
        <g key={c} transform={`rotate(${i * 90} 28 28)`} fill={c}>
          <rect x="30" y="8.500" width="7.600" height="18.500" rx="3.800" />
          <path d="M40 27v-4a4 4 0 1 1 4 4z" />
        </g>
      ))}
    </S>
  </div>
);
const Chrome = () => (
  <div className={`${tile} bg-[#f7f5f6]`}>
    <S>
      <path d="M28 28L7.200 16a24 24 0 0 1 41.600 0z" fill="#d9483b" />
      <path d="M28 28L28 52A24 24 0 0 1 7.200 16z" fill="#4a9e54" />
      <path d="M28 16h20.800A24 24 0 0 1 28 52L38.400 34z" fill="#f3bc3d" />
      <path d="M7.200 16L17.600 34 28 28V16z" fill="#4a9e54" />
      <path d="M9 14.500L28 16v6l-9 3z" fill="#d9483b" />
      <circle cx="28" cy="28" r="11.500" fill="#fff" />
      <circle cx="28" cy="28" r="9.300" fill="#4677e4" />
    </S>
  </div>
);
const VsCode = () => (
  <div className={`${tile} bg-white`}>
    <S>
      <path d="M38 8l10 5v30l-10 5z" fill="#3c99e8" />
      <path d="M38 8L8 34l4 4 26-19z" fill="#2a73b8" />
      <path d="M38 48L8 22l4-4 26 19z" fill="#2f86d0" />
    </S>
  </div>
);

function OfficeTile({ letter, back, mid, front }: { letter: string; back: string; mid: string; front: string }) {
  return (
    <div className={`relative ${tile} bg-white`}>
      <S>
        {letter === 'P' ? (
          <>
            <circle cx="29" cy="28" r="19" fill={back} />
            <path d="M29 9a19 19 0 0 1 19 19H29z" fill={mid} />
          </>
        ) : (
          <>
            <rect x="14" y="9" width="33" height="38" rx="3" fill={back} />
            <path d="M14 18.500h33V28H14z" fill={mid} />
            <path d="M14 37.500h33V44q0 3-3 3H17q-3 0-3-3z" fill={front} />
          </>
        )}
        <rect x="5" y="17" width="23" height="22" rx="2.500" fill={front} />
      </S>
      <span className="absolute top-[17px] left-[5px] w-[23px] text-center text-[17px] leading-[22px] font-bold text-white">{letter}</span>
    </div>
  );
}

const Terminal = () => (
  <div className="flex size-[56px] rounded-[13px] border-[2px] border-[#b9bcc0] bg-[#0c0c0c] p-[3px]">
    <div className="flex-1 rounded-[9px] bg-[#232323] pl-[3px] font-['Liberation_Mono'] text-[14px] leading-[20px] font-bold text-white">&gt;_</div>
  </div>
);
const Xcode = () => (
  <div className="relative">
    <div className={`${tile} bg-linear-to-b from-[#4fb2ee] to-[#2c60d8]`}>
      <S>
        <rect x="3.500" y="3.500" width="49" height="49" rx="10" stroke="#9fd0f7" strokeWidth="1" />
        <circle cx="28" cy="30" r="20" stroke="#8cc3f3" strokeWidth="1" />
        <path d="M25 13l16 30M31 13L15 43M10 36h36" stroke="#a8d3f8" strokeWidth="3" />
      </S>
    </div>
    <svg className="absolute -top-[6px] left-0" width="66" height="68" viewBox="0 0 66 68">
      <path d="M44 10l7 3q-2 10-9 24L27 64q-3 3-7-1 1-8 12-31z" fill="#34363b" />
      <path d="M44 12l3 1-12 24-2-1z" fill="#6a6e75" />
      <path d="M32 4q11-5 20-1l6 8 5 1-2 9-6-3-3-4-5 2-6-7q-4-4-9-5z" fill="#45484e" />
    </svg>
  </div>
);
const Reader = ({ w, h }: { w: number; h: number }) => (
  <svg width={w} height={h} viewBox="0 0 70 70">
    <rect width="70" height="70" rx="3" fill="#4a95ba" />
    <ellipse cx="35" cy="48" rx="34" ry="34" fill="#8fd6ea" />
    <ellipse cx="42" cy="46" rx="23" ry="24" fill="#c8f2fa" />
    <g fill="#05080a">
      <path d="M0 58Q12 50 30 56q18 6 40 4v7q0 3-3 3H3q-3 0-3-3z" />
      <path d="M17 12q0-8 8-8.500 8 0 8.500 7l1 4-2 1q0 5-5 5H19q-3-4-2-8.500z" />
      <path d="M19 19q-9 5-12 18-3 11-3 20l20 2 3-20 1-20z" />
      <path d="M20 24l7-2 5 13 8-2 2 3-12 6z" />
      <path d="M46 21l5 1.500L43.500 40l-6 2.500z" />
      <path d="M14 56l18-17q4-2 6 2l8 18 6 3v3H42l-9-17-10 13z" />
    </g>
    <path d="M12 10h1M50 8h1M60 20h1M8 24h1M58 5h1" stroke="#d8f3fb" strokeWidth="1.500" />
  </svg>
);

const DocStack = () => (
  <svg width="48" height="68" viewBox="0 0 48 68">
    <path d="M2 6l3-6h24v66H2z" fill="#4f4c58" />
    <path d="M6 3h26l13 3v60H5z" fill="#dedee2" />
    <path d="M4 4h26l15 20v43H4z" fill="#f0f0f1" />
    <path d="M30 4l15 20-12-1z" fill="#c9c9ce" />
    {[10, 14, 18, 22].map((y) => (
      <path key={y} d={`M8 ${y}h18`} stroke="#9d9da3" strokeWidth="1.500" />
    ))}
    {[28, 31, 36, 39, 42].map((y) => (
      <path key={y} d={`M8 ${y}h32`} stroke="#bdbdc2" strokeWidth="1" />
    ))}
  </svg>
);

const lineRows = [0, 1, 2, 3, 4, 5, 6, 7, 8, 9, 10, 11, 12];

const TermThumb = () => (
  <div className="relative flex h-[68px] w-[68px] flex-col items-center pt-[10px]">
    <svg width="68" height="46" viewBox="0 0 68 46">
      <rect width="68" height="46" rx="3" fill="#0b0b0b" />
      <rect x="3" y="3" width="62" height="40" fill="#f2f3f0" />
      {lineRows.map((i) => (
        <g key={i} strokeWidth="1" strokeDasharray="7 1 4 2 10 1">
          <path d={`M4 ${5 + i * 3}h${18 + ((i * 7) % 12)}`} stroke="#9cc98d" />
          <path d={`M${26 + ((i * 5) % 9)} ${5 + i * 3}h26`} stroke="#a5a5a5" />
        </g>
      ))}
    </svg>
    <span className="absolute top-[54px] rounded-full bg-[#45405c] px-[5px] text-[13.500px] leading-[15px] whitespace-nowrap text-white">python3…</span>
  </div>
);
const WordThumb = () => (
  <div className="relative flex h-[68px] w-[66px] items-center">
    <svg width="66" height="50" viewBox="0 0 66 50">
      <rect width="66" height="50" fill="#fbfbfb" />
      <rect width="66" height="2" fill="#3a66b8" />
      <rect y="2" width="66" height="7" fill="#e4e6ea" />
      <path d="M27 14h12" stroke="#777" strokeWidth="1.200" />
      {lineRows.map((i) => (
        <path key={i} d={`M11 ${18 + i * 2.3}h44`} stroke={i < 5 ? '#8e9cc0' : '#bcbcc0'} strokeWidth="1.100" strokeDasharray="9 1 5 1" />
      ))}
    </svg>
    <div className="absolute right-[1px] bottom-[2px] flex size-[21px] items-center justify-center rounded-[5px] bg-white">
      <span className="flex size-[15px] items-center justify-center rounded-[2px] bg-[#2b5fc0] text-[10px] font-bold text-white">W</span>
    </div>
  </div>
);
const ReaderThumb = () => (
  <div className="relative flex h-[68px] w-[66px] items-center">
    <svg width="66" height="60" viewBox="0 0 66 60">
      <rect width="66" height="60" fill="#fbfbfb" />
      <rect width="66" height="2" fill="#c9cbd0" />
      <rect width="4" height="60" fill="#dfe4ea" />
      {lineRows.map((i) => (
        <path key={i} d={`M8 ${8 + i * 4}h${i === 9 ? 18 : 52}`} stroke={i === 9 ? '#444' : '#a9a9ae'} strokeWidth="1.100" strokeDasharray="6 1 9 1 4 1" />
      ))}
      <path d="M0 59h40" stroke="#5b9ad8" strokeWidth="1.500" />
    </svg>
    <div className="absolute -right-[1px] -bottom-[1px]">
      <Reader w={26} h={26} />
    </div>
  </div>
);
const Trash = () => (
  <svg width="52" height="66" viewBox="0 0 52 66">
    <path d="M3 10l7-6 8 3 6-5 8 4 7-3 10 8-4 6H5z" fill="#dcdcdc" />
    <path d="M8 9l8-3 5 6zM22 4l6 2-4 6zM34 6l9 3-6 5zM18 12l5-4 8 6z" fill="#7f8790" />
    <path d="M12 8l4 2-5 3zM28 9l4-3 2 5z" fill="#b98850" />
    <path d="M1 13q25 6 50 0l-6 48q-.5 4-5 4.500-14 1-28 0-4.500-.5-5-4.500z" fill="#d3d1d6" />
    <path d="M10 18l6 44M21 17l2 47M42 18l-6 44M12 30l26 8M40 26L16 46" stroke="#dddbe0" strokeWidth="2.500" />
    <path d="M1 13q25 6 50 0" stroke="#f4f4f6" strokeWidth="1.500" fill="none" />
  </svg>
);

type DockItem = { id: string; icon: ReactNode; dot?: boolean; badge?: string };
const appsLeft: DockItem[] = [
  { id: 'finder', icon: <Finder />, dot: true },
  { id: 'launchpad', icon: <Launchpad /> },
  { id: 'safari', icon: <Safari /> },
  { id: 'mail', icon: <Mail />, dot: true, badge: '24' },
  { id: 'maps', icon: <MapsIcon /> },
  { id: 'photos', icon: <Photos /> },
  { id: 'calendar', icon: <Calendar /> },
  { id: 'contacts', icon: <Contacts /> },
  { id: 'reminders', icon: <Reminders /> },
  { id: 'notes', icon: <Notes /> },
  { id: 'tv', icon: <AppleTv /> },
  { id: 'numbers', icon: <Numbers />, dot: true },
  { id: 'music', icon: <Music /> },
  { id: 'podcasts', icon: <Podcasts /> },
  { id: 'news', icon: <News /> },
  { id: 'keynote', icon: <Keynote /> },
  { id: 'pages', icon: <Pages /> },
  { id: 'messages', icon: <Messages />, dot: true, badge: '4' },
  { id: 'facetime', icon: <FaceTime />, badge: '2' },
  { id: 'appstore', icon: <AppStore /> },
  { id: 'settings', icon: <Settings />, badge: '1' },
];
const appsRight: DockItem[] = [
  { id: 'zoom', icon: <Zoom />, dot: true },
  { id: 'slack', icon: <Slack />, dot: true },
  { id: 'chrome', icon: <Chrome />, dot: true },
  { id: 'vscode', icon: <VsCode />, dot: true },
  { id: 'excel', icon: <OfficeTile letter="X" back="#3f9a62" mid="#55b57c" front="#2a7041" />, dot: true },
  { id: 'terminal', icon: <Terminal />, dot: true },
  { id: 'xcode', icon: <Xcode />, dot: true },
  { id: 'reader', icon: <Reader w={70} h={70} />, dot: true },
  { id: 'powerpoint', icon: <OfficeTile letter="P" back="#d5603f" mid="#eb9274" front="#b9452c" />, dot: true },
  { id: 'word', icon: <OfficeTile letter="W" back="#3c78d0" mid="#4f92e0" front="#254ea8" />, dot: true },
];
const files: DockItem[] = [
  { id: 'stack', icon: <DocStack /> },
  { id: 'term', icon: <TermThumb /> },
  { id: 'doc', icon: <WordThumb /> },
  { id: 'book', icon: <ReaderThumb /> },
  { id: 'trash', icon: <Trash /> },
];

function Slot({ item }: { item: DockItem }) {
  return (
    <div className="relative flex w-[74.700px] shrink-0 justify-center">
      <div className="flex h-[84px] items-center">{item.icon}</div>
      {item.badge && (
        <span className="absolute top-[6px] left-[48px] flex size-[27px] items-center justify-center rounded-full bg-[#e34e43] text-[15.500px] leading-none text-white shadow-[0_1px_3px_rgba(0,0,0,0.3)]">
          {item.badge}
        </span>
      )}
      {item.dot && <span className="absolute top-[78px] left-[33px] size-[8px] rounded-full bg-[#08020f]" />}
    </div>
  );
}

function Dock() {
  return (
    <footer className="absolute top-[1698px] left-[57px] z-30 flex h-[92px] w-[2767px] rounded-[26px] border-2 border-[#8f86ac]/70 bg-linear-to-r from-[#61557f] via-[#64568c] via-55% to-[#63568a] pl-[3px] shadow-[0_0_80px_rgba(0,0,0,0.3)]">
      <div className="absolute inset-0 rounded-[24px] bg-[linear-gradient(90deg,transparent_56%,#8d53b1_67%,#8d53b1_75%,transparent_90%)]" />
      {appsLeft.map((i) => (
        <Slot key={i.id} item={i} />
      ))}
      <div className="relative flex w-[33px] shrink-0 justify-center pt-[10px]">
        <span className="h-[68px] w-[2px] bg-[#2f2157]" />
      </div>
      {appsRight.map((i) => (
        <Slot key={i.id} item={i} />
      ))}
      <div className="relative flex w-[33px] shrink-0 justify-center pt-[10px] pl-[2px]">
        <span className="h-[68px] w-[2px] bg-[#2f2157]" />
      </div>
      {files.map((i) => (
        <Slot key={i.id} item={i} />
      ))}
    </footer>
  );
}

export default function App() {
  return (
    <div className="relative h-[1800px] w-[2880px] overflow-hidden bg-[#0b0324] font-['Inter','Liberation_Sans',sans-serif]">
      <div className="absolute inset-x-0 top-0 h-[120px] bg-[#2a0a62]" />
      <svg className="absolute bottom-0 left-0" width="2880" height="120" viewBox="0 0 2880 120">
        <path d="M1715 0h800l60 20h-820z" fill="#2c0638" />
        <path d="M800 105h700l60 15H820z" fill="#12043a" />
        <path d="M1860 105h560l100 15H1890z" fill="#3f0b5e" />
        <path d="M2750 0h130v120H2600z" fill="#0d0430" />
      </svg>
      <BackBrowser />
      <CodeWindow />
      <FrontBrowser />
      <Dock />
      <MenuBar />
    </div>
  );
}
